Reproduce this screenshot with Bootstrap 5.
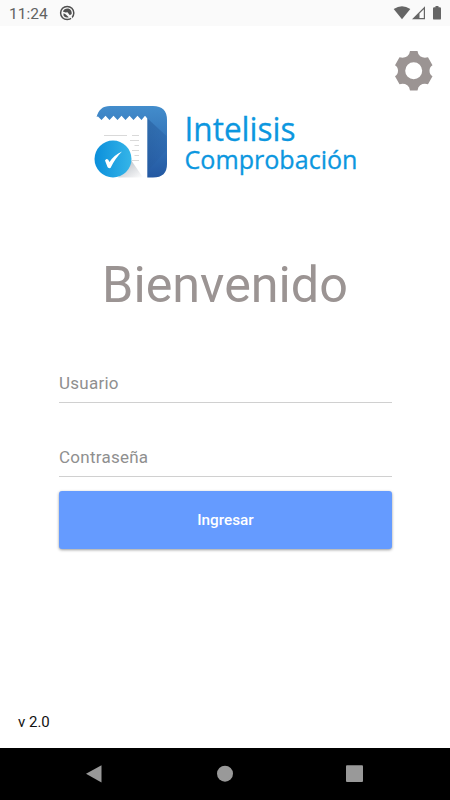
<!DOCTYPE html>
<html lang="es">
<head>
<meta charset="utf-8">
<meta name="viewport" content="width=device-width, initial-scale=1">
<title>Intelisis Comprobación</title>
<link href="https://cdn.jsdelivr.net/npm/bootstrap@5.3.0/dist/css/bootstrap.min.css" rel="stylesheet">
<style>
body{font-family:Roboto,sans-serif;background:#fff}
svg{display:block}
.status-bar{height:26px;background:#fafafa;color:#626262;font-size:15.5px;line-height:26px;padding:0 8px 0 9px}
.clock{width:49px;padding-top:1px}
.settings-row{height:79px;padding:24px 16px 0 0}
.brand-logo{margin-left:94px}
.welcome{font-size:50.3px;line-height:60px;color:#9b9493;margin-top:76px;font-weight:400}
.login-form{margin:0 58px 0 59px;padding-top:52px}
.login-form .form-control{height:36px;padding:0 0 4px;border:0;border-bottom:1px solid #d0d0d0;border-radius:0;font-size:17px;letter-spacing:.25px;color:#555;background:transparent;box-shadow:none}
.login-form .form-control::placeholder{color:#8f8f8f;opacity:1}
.second-field{margin-top:38px}
.enter-btn{height:58px;margin-top:14px;background:#659bff;color:#fff;border:0;border-radius:3px;font-size:15.3px;font-weight:500;box-shadow:0 1px 3px rgba(0,0,0,.4)}
.version{font-size:15px;line-height:20px;color:#111;padding:0 0 16px 18px}
.nav-keys{height:52px;background:#000}
</style>
</head>
<body>
<div class="d-flex flex-column vh-100 overflow-hidden">
  <header class="status-bar d-flex align-items-center">
    <span class="clock">11:24</span>
    <svg width="18" height="26" viewBox="58 0 18 26"><circle cx="67.200" cy="13" r="6.600" fill="none" stroke="#505050" stroke-width="1.500"/><path fill="#505050" d="M62.800 11.500Q64.500 8 68.500 8.600Q72 9.800 71.700 14L69.800 15.200L67.500 12.200L65.500 12.500ZM63.500 13.200L65.500 14.300L68.800 17.200Q65 18.300 63.500 15.500Z"/><path d="M69.500 15.500L72.500 19" stroke="#fafafa" stroke-width="1.200"/></svg>
    <svg class="ms-auto" width="50" height="26" viewBox="392 0 50 26" fill="#666"><path d="M393.700 9Q402 3.500 410.300 9L402 19.300Z"/><path d="M412 19.300 425 6.200V19.300ZM419.500 13.500V18H423.800V9.200Z" fill-rule="evenodd"/><path d="M435.500 6h3v1.200h1.300q1.200 0 1.200 1.200v10q0 1.200-1.200 1.200h-5.600q-1.200 0-1.200-1.200v-10q0-1.200 1.200-1.200h1.300Z"/></svg>
  </header>
  <div class="settings-row d-flex justify-content-end align-items-start">
    <svg width="40" height="41" viewBox="394 50 40 41"><path fill="#9b9493" fill-rule="evenodd" d="M410 51H417.500Q418 55 420.200 56.300Q423.500 58.500 428 57.300L432.500 65.300Q429.500 67 429.500 70.700Q429.500 74.500 432.500 76.200L428 84.200Q423.500 83 420.200 85.200Q418 86.500 417.500 90.500H410Q409.500 86.500 407.300 85.200Q404 83 399.500 84.200L395 76.200Q398 74.500 398 70.700Q398 67 395 65.300L399.500 57.300Q404 58.500 407.300 56.300Q409.500 55 410 51ZM413.700 62.200A8.500 8.500 0 1 0 413.700 79.200A8.500 8.500 0 1 0 413.700 62.200Z"/></svg>
  </div>
  <svg class="brand-logo" width="270" height="74" viewBox="94 105 270 74">
    <defs>
      <linearGradient id="roll" x1="0" y1="0" x2="0" y2="1"><stop stop-color="#438dcc"/><stop offset="1" stop-color="#2358a2"/></linearGradient>
      <linearGradient id="fold" x1="0" y1="0" x2="1" y2="1"><stop stop-color="#1c4b88"/><stop offset="1" stop-color="#2d68b2"/></linearGradient>
      <linearGradient id="seal" x1="0" y1="0" x2="1" y2="0"><stop stop-color="#0b8fdb"/><stop offset="1" stop-color="#35b5e8"/></linearGradient>
      <linearGradient id="cast" x1="0" y1="0" x2="1" y2="1"><stop stop-color="#aeb4bc"/><stop offset="1" stop-color="#fff"/></linearGradient>
    </defs>
    <path fill="url(#roll)" d="M96.500 117.500Q99 106 110 106H153Q167 106 167 120V164Q167 177.500 153 177.500H147V122H97Z"/>
    <path fill="url(#fold)" d="M147 118 166.500 136V150L147 172Z" opacity=".4"/>
    <path fill="#fff" d="M96 178V117L98 116.500L101.500 120L105.500 115.800L109.500 120L113.500 115.800L117.500 120L121.500 115.800L125.500 120L129.500 115.800L133.500 120L137.500 115.800L141.500 120L145 115.800L147.300 118.500V178Z"/>
    <path fill="url(#cast)" d="M131 160 143 177.500H118Z"/>
    <path d="M104 135.500h23M132 135.500h7M130 140.500h9M134.500 145.500h4.500M132 150.500h7M134.500 155.500h4.500M132 160.500h7" stroke="#d9d9d9" stroke-width="1" fill="none"/>
    <circle cx="113" cy="159" r="18.500" fill="url(#seal)"/>
    <path fill="#fff" d="M105 160.500Q107.500 157 109.500 162Q114 155 122 151.500Q115 158.500 110.500 168Q108 168.500 107.500 167Z"/>
    <g fill="#0c97df" stroke="#0c97df" stroke-width=".3" font-family="'Open Sans','Noto Sans',sans-serif">
      <text x="184.500" y="141" font-size="32" textLength="111" lengthAdjust="spacingAndGlyphs">Intelisis</text>
      <text x="184.500" y="168.800" font-size="25.500" textLength="173" lengthAdjust="spacingAndGlyphs">Comprobación</text>
    </g>
  </svg>
  <h1 class="welcome text-center mb-0">Bienvenido</h1>
  <form class="login-form">
    <input class="form-control" type="text" placeholder="Usuario" aria-label="Usuario">
    <input class="form-control second-field" type="password" placeholder="Contraseña" aria-label="Contraseña">
    <button class="btn enter-btn w-100" type="button">Ingresar</button>
  </form>
  <div class="version mt-auto">v 2.0</div>
  <nav class="nav-keys flex-shrink-0">
    <svg width="450" height="52" viewBox="0 748 450 52" fill="#999"><path d="M86 773.700 101.500 765.200V782.500Z"/><circle cx="225" cy="773.700" r="8"/><rect x="346" y="765.300" width="17" height="16.700" rx="1"/></svg>
  </nav>
</div>
<script src="https://cdn.jsdelivr.net/npm/bootstrap@5.3.0/dist/js/bootstrap.bundle.min.js"></script>
</body>
</html>
